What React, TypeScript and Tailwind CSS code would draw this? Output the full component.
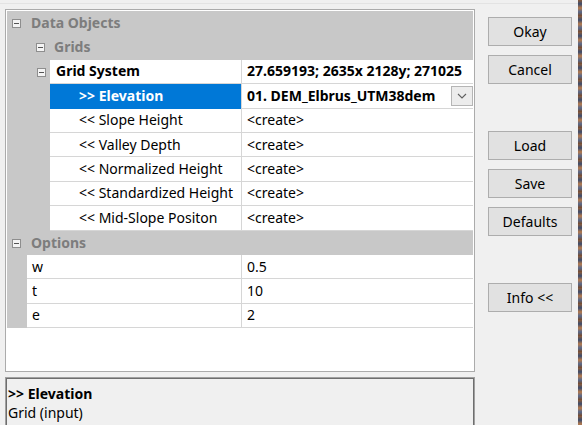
import React from "react";

const FONT = { fontFamily: '"Noto Sans", "Open Sans", sans-serif' };

function MinusBox() {
  return (
    <div className="flex items-center justify-center w-[9px] h-[9px] border border-[#8e8e8e] bg-[#f4f4f4]">
      <div className="w-[5px] h-[1px] bg-[#555555]" />
    </div>
  );
}

function CatRow({ label, boxX, textX }: { label: string; boxX: number; textX: number }) {
  return (
    <div className="relative h-[24.4px] shrink-0 bg-[#c8c8c8]">
      <div className="absolute top-[8px]" style={{ left: boxX - 7 }}>
        <MinusBox />
      </div>
      <span className="absolute font-bold text-[#7d7d7d] leading-[24px] top-0" style={{ left: textX - 7 }}>
        {label}
      </span>
    </div>
  );
}

function ItemRow({
  indent,
  label,
  value,
  labelPad,
  bold,
  selected,
  box,
  dropdown,
}: {
  indent: number;
  label: string;
  value: string;
  labelPad: number;
  bold?: boolean;
  selected?: boolean;
  box?: boolean;
  dropdown?: boolean;
}) {
  return (
    <div className="flex h-[24.4px] shrink-0">
      <div className="relative bg-[#c8c8c8] shrink-0" style={{ width: indent }}>
        {box && (
          <div className="absolute top-[8px] left-[30px]">
            <MinusBox />
          </div>
        )}
      </div>
      <div
        className={
          "shrink-0 flex items-center whitespace-nowrap overflow-hidden border-b " +
          (selected ? "bg-[#0078d7] text-white font-bold border-[#0078d7]" : "bg-white text-black border-[#d6d6d6]") +
          (bold ? " font-bold" : "")
        }
        style={{ width: 234 - indent, paddingLeft: labelPad }}
      >
        {label}
      </div>
      <div className="w-[1px] bg-[#d6d6d6] shrink-0" />
      <div
        className={
          "flex-1 min-w-0 flex items-center bg-white border-b border-[#d6d6d6] pl-[5px] whitespace-nowrap overflow-hidden relative " +
          (bold || dropdown ? "font-bold" : "")
        }
      >
        <span className="text-black">{value}</span>
        {dropdown && (
          <div className="absolute right-0 top-[2px] w-[22px] h-[20px] bg-[#ececec] border border-[#b5b5b5] flex items-center justify-center">
            <svg width="10" height="6" viewBox="0 0 10 6">
              <path d="M1 1 L5 5 L9 1" fill="none" stroke="#606060" strokeWidth="1.1" />
            </svg>
          </div>
        )}
      </div>
    </div>
  );
}

function Btn({ label, className = "" }: { label: string; className?: string }) {
  return (
    <div
      className={
        "w-[84px] h-[29px] shrink-0 bg-[#e1e1e1] border border-[#adadad] flex items-center justify-center text-black text-[14px] " +
        className
      }
    >
      {label}
    </div>
  );
}

export default function App() {
  return (
    <div
      className="relative w-[582px] h-[425px] bg-[#f0f0f0] overflow-hidden flex text-[14px] leading-none"
      style={FONT}
    >
      <div className="absolute left-0 right-[4px] top-[3px] h-[1px] bg-[#e3e3e3]" />
      {/* left column */}
      <div className="pl-[5px] pt-[9px] w-[475px] shrink-0 flex flex-col">
        <div className="h-[363px] shrink-0 border border-[#ababab] bg-white p-[1px] flex flex-col overflow-hidden">
          <CatRow label="Data Objects" boxX={12} textX={31} />
          <CatRow label="Grids" boxX={36} textX={54} />
          <ItemRow indent={43} label="Grid System" value="27.659193; 2635x 2128y; 271025" labelPad={6} bold box />
          <ItemRow indent={43} label=">> Elevation" value="01. DEM_Elbrus_UTM38dem" labelPad={29} selected dropdown />
          <ItemRow indent={43} label="<< Slope Height" value="<create>" labelPad={29} />
          <ItemRow indent={43} label="<< Valley Depth" value="<create>" labelPad={29} />
          <ItemRow indent={43} label="<< Normalized Height" value="<create>" labelPad={29} />
          <ItemRow indent={43} label="<< Standardized Height" value="<create>" labelPad={29} />
          <ItemRow indent={43} label="<< Mid-Slope Positon" value="<create>" labelPad={29} />
          <CatRow label="Options" boxX={12} textX={31} />
          <ItemRow indent={20} label="w" value="0.5" labelPad={5} />
          <ItemRow indent={20} label="t" value="10" labelPad={5} />
          <ItemRow indent={20} label="e" value="2" labelPad={5} />
          <div className="flex-1 bg-white" />
        </div>
        <div className="mt-[5px] h-[60px] shrink-0 border border-[#a0a0a0] shadow-[inset_1px_1px_0_#6e6e6e,inset_-1px_-1px_0_#6e6e6e] px-[2px] pt-[9px] flex flex-col gap-[5px]">
          <div className="font-bold text-black">&gt;&gt; Elevation</div>
          <div className="text-black">Grid (input)</div>
        </div>
      </div>
      {/* right column */}
      <div className="pl-[13px] pt-[17px] flex flex-col gap-[9px]">
        <Btn label="Okay" />
        <Btn label="Cancel" />
        <Btn label="Load" className="mt-[38px]" />
        <Btn label="Save" />
        <Btn label="Defaults" />
        <Btn label="Info <<" className="mt-[38px]" />
      </div>
      <div className="absolute right-0 top-0 w-[4px] h-full bg-[repeating-linear-gradient(180deg,#8a5a3a_0px,#3b4c6e_4px,#b57a4c_8px,#56688c_12px,#7a4a2a_16px)]" />
    </div>
  );
}
